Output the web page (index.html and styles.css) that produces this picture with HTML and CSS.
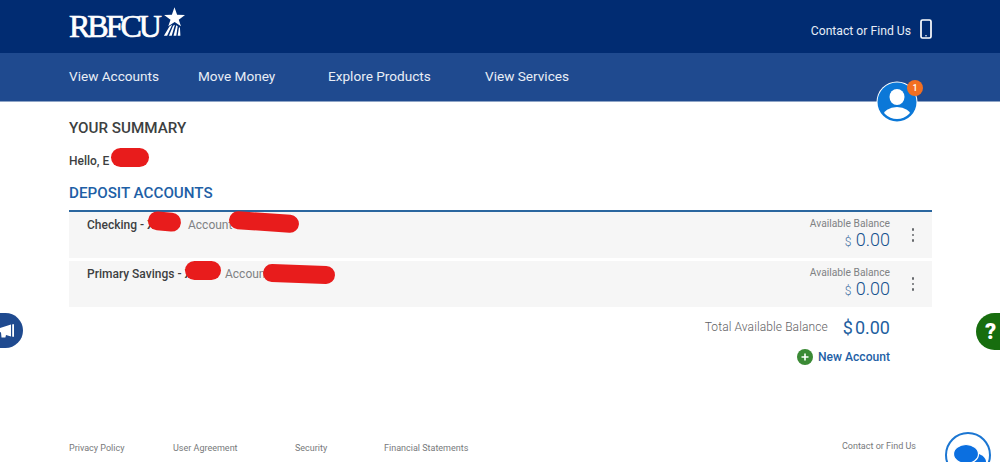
FILE: index.html
```html
<!DOCTYPE html>
<html lang="en">
<head>
<meta charset="utf-8">
<title>RBFCU - Your Summary</title>
<link rel="stylesheet" href="styles.css">
</head>
<body>
<div class="page">
  <header class="topbar">
    <div class="logo">
      <span class="logo-text">RBFCU</span>
      <svg class="logo-star" viewBox="0 0 24 32" width="22" height="30" aria-hidden="true">
        <path d="M12.5 0l2.9 8.2 8.6.2-6.8 5.2 2.4 7.1-6.9-4.6-7 4.6 2.5-7.2L1.2 8.400l8.500-.2z" fill="#fff"/>
        <path d="M7 21l3-2-5.500 12H1zM11 20l2-1-3.500 12H6.500zM14.500 19.500l1.500 1-1.500 10.500h-3zM17.500 21.500l1 1 .5 8.500h-3z" fill="#fff"/>
      </svg>
    </div>
    <a class="contact">
      <span>Contact or Find Us</span>
      <svg class="phone" viewBox="0 0 12 20" width="12" height="20" aria-hidden="true">
        <rect x="1" y="1" width="10" height="18" rx="1.500" fill="none" stroke="#fff" stroke-width="1.700"/>
        <circle cx="6" cy="16.800" r=".8" fill="#fff"/>
      </svg>
    </a>
  </header>
  <nav class="mainnav">
    <a class="nav-accounts">View Accounts</a>
    <a class="nav-money">Move Money</a>
    <a class="nav-products">Explore Products</a>
    <a>View Services</a>
  </nav>

  <main class="content">
    <h1 class="summary">YOUR SUMMARY</h1>
    <p class="hello">Hello, E</p>
    <h2 class="deposit">DEPOSIT ACCOUNTS</h2>
    <section class="accounts">
      <article class="account">
        <div class="acct-name"><strong class="name-check">Checking - X</strong><span>Account</span></div>
        <div class="balance">
          <span class="bal-label">Available Balance</span>
          <span class="bal-value"><small>$</small> 0.00</span>
        </div>
        <div class="dots"><i></i><i></i><i></i></div>
      </article>
      <article class="account">
        <div class="acct-name"><strong class="name-save">Primary Savings - X</strong><span>Account</span></div>
        <div class="balance">
          <span class="bal-label">Available Balance</span>
          <span class="bal-value"><small>$</small> 0.00</span>
        </div>
        <div class="dots"><i></i><i></i><i></i></div>
      </article>
    </section>
    <div class="total">
      <span class="total-label">Total Available Balance</span>
      <span class="total-value"><span class="total-cur">$</span>0.00</span>
    </div>
    <div class="new-account">
      <svg viewBox="0 0 16 16" width="16" height="16" aria-hidden="true">
        <circle cx="8" cy="8" r="8" fill="#3b8a35"/>
        <path d="M8 4.500v7M4.500 8h7" stroke="#fff" stroke-width="1.600"/>
      </svg>
      <a>New Account</a>
    </div>
  </main>

  <footer class="footer">
    <nav class="foot-links">
      <a class="fl-1">Privacy Policy</a>
      <a class="fl-2">User Agreement</a>
      <a class="fl-3">Security</a>
      <a>Financial Statements</a>
    </nav>
    <a class="foot-contact">Contact or Find Us</a>
  </footer>

  <div class="avatar">
    <svg viewBox="0 0 40 40" width="40" height="40" aria-hidden="true">
      <defs><clipPath id="avclip"><circle cx="20" cy="20" r="17"/></clipPath></defs>
      <circle cx="20" cy="20" r="20.500" fill="#fff"/>
      <circle cx="20" cy="20" r="19.500" fill="#0b78d8"/>
      <g clip-path="url(#avclip)" fill="#fff">
        <ellipse cx="20" cy="15" rx="7.500" ry="8"/>
        <ellipse cx="20" cy="34" rx="14" ry="9"/>
      </g>
    </svg>
    <span class="badge">1</span>
  </div>

  <div class="side side-left">
    <svg viewBox="0 0 18 14" width="18" height="14" aria-hidden="true">
      <path d="M0 4.500l13-4v12l-5-1.500-.6 2.500H3.500L3 8.400 0 7.500z" fill="#fff"/>
      <rect x="14.200" y="0" width="1.800" height="13" rx=".9" fill="#fff"/>
    </svg>
  </div>
  <div class="side side-right"><span>?</span></div>
  <div class="chat">
    <svg viewBox="0 0 46 46" width="46" height="46" aria-hidden="true">
      <circle cx="23" cy="23" r="22" fill="#fff" stroke="#1b76d2" stroke-width="2"/>
      <ellipse cx="29" cy="30" rx="12" ry="9" fill="#0b6fe0"/>
      <ellipse cx="21" cy="22" rx="12.500" ry="9.500" fill="#0b6fe0" stroke="#fff" stroke-width="1.200"/>
    </svg>
  </div>

  <i class="blot blot-hello"></i>
  <i class="blot blot-c1"></i>
  <i class="blot blot-c2"></i>
  <i class="blot blot-s1"></i>
  <i class="blot blot-s2"></i>
</div>
</body>
</html>
```

FILE: styles.css
```css
* { box-sizing: border-box; }
html, body { margin: 0; padding: 0; }
body { font-family: Roboto, "Liberation Sans", sans-serif; background: #fff; color: #3f4143; }
a { color: inherit; text-decoration: none; }

.page { position: relative; width: 1000px; height: 462px; overflow: hidden; }

.topbar {
  height: 53px;
  background: #012c72;
  padding: 0 68px 0 69px;
  display: flex;
  justify-content: space-between;
  align-items: center;
  color: #fff;
}
.logo { display: flex; align-items: flex-start; height: 32px; margin-top: -8px; }
.logo-text {
  font-family: "Liberation Serif", serif;
  font-size: 32px;
  font-weight: 400;
  line-height: 38px;
  letter-spacing: -3px;
  -webkit-text-stroke: .7px #fff;
  width: 94px;
}
.contact { display: flex; align-items: center; gap: 9px; font-size: 12.200px; color: #e6edf7; margin-top: 9px; }
.phone { margin-top: -5px; }

.mainnav {
  height: 49px;
  background: #1f4a8f;
  border-bottom: 1px solid #8ea4c6;
  padding: 0 0 2px 69px;
  display: flex;
  align-items: center;
  font-size: 13.600px;
  color: #e9eef6;
}
.nav-accounts { width: 129px; }
.nav-money { width: 130px; }
.nav-products { width: 157px; }

.content { padding: 0 68px 0 69px; }
.summary { margin: 17px 0 0; font-size: 15.200px; font-weight: 500; line-height: 18px; color: #3d3f41; }
.hello { margin: 16px 0 0; font-size: 12px; font-weight: 500; line-height: 16px; color: #3d3f41; }
.deposit { margin: 15px 0 0; font-size: 15.200px; font-weight: 500; line-height: 19px; color: #1e5fa6; }

.accounts { margin-top: 7px; border-top: 2px solid #2a669f; display: flex; flex-direction: column; gap: 3px; }
.account {
  height: 46px;
  background: #f6f6f6;
  padding: 3px 0 0 18px;
  display: flex;
  align-items: flex-start;
}
.acct-name { flex: 1; display: flex; font-size: 12px; line-height: 18px; color: #808284; padding-top: 1px; }
.acct-name strong { font-weight: 500; color: #3d3f41; }
.name-check { width: 101px; }
.name-save { width: 138px; }
.balance { display: flex; flex-direction: column; align-items: flex-end; margin-top: 2px; }
.bal-label { font-size: 10.250px; line-height: 13px; color: #808284; }
.bal-value { font-size: 18px; font-weight: 300; line-height: 20px; color: #16528f; }
.bal-value small { font-size: 12px; color: #3f6fa3; font-weight: 300; }
.dots { width: 42px; padding-left: 4px; display: flex; flex-direction: column; align-items: center; gap: 3px; margin-top: 13px; }
.dots i { width: 2.500px; height: 2.500px; border-radius: 50%; background: #66696c; }

.total { display: flex; justify-content: flex-end; align-items: center; padding-right: 42px; margin-top: 7px; height: 26px; }
.total-label { font-size: 12px; font-weight: 300; color: #5f6163; letter-spacing: .1px; }
.total-value { font-size: 18px; color: #235f9f; margin-left: 15px; }
.total-cur { margin-right: 2px; }

.new-account { display: flex; justify-content: flex-end; align-items: center; gap: 5px; padding-right: 42px; margin-top: 7px; height: 20px; font-size: 12.100px; font-weight: 500; color: #1e5fa6; }

.footer { position: absolute; left: 69px; right: 84px; top: 441px; display: flex; justify-content: space-between; font-size: 9px; line-height: 14px; color: #77797b; }
.foot-links { display: flex; }
.fl-1 { width: 104px; }
.fl-2 { width: 122px; }
.fl-3 { width: 89px; }
.foot-contact { margin-top: -2px; }

.avatar { position: absolute; left: 877px; top: 82px; width: 40px; height: 40px; }
.avatar svg { display: block; overflow: visible; }
.badge {
  position: absolute; left: 30px; top: -2px; width: 16px; height: 16px; border-radius: 50%;
  background: #f26f21; color: #fff; font-size: 9px; font-weight: 500; line-height: 16px; text-align: center;
}

.side { position: absolute; top: 313px; height: 35px; display: flex; align-items: center; }
.side-left { left: 0; width: 23px; background: #1f4a8f; border-radius: 0 18px 18px 0; justify-content: flex-end; padding-right: 7px; overflow: hidden; }
.side-left svg { flex: none; }
.side-right { left: 976px; width: 24px; height: 37px; background: #176d0e; border-radius: 19px 0 0 19px; padding-left: 9px; overflow: hidden; color: #fff; font-size: 22px; font-weight: 900; }

.chat { position: absolute; left: 945px; top: 432px; width: 46px; height: 46px; }
.chat svg { display: block; }

.blot { position: absolute; background: #e81c1c; border-radius: 10px; }
.blot-hello { left: 111px; top: 148px; width: 38px; height: 19px; }
.blot-c1 { left: 148px; top: 212px; width: 33px; height: 19px; transform: rotate(5deg); }
.blot-c2 { left: 229px; top: 213px; width: 70px; height: 18px; transform: rotate(4deg); }
.blot-s1 { left: 185px; top: 261px; width: 36px; height: 19px; }
.blot-s2 { left: 263px; top: 265px; width: 72px; height: 18px; transform: rotate(2deg); }
```
